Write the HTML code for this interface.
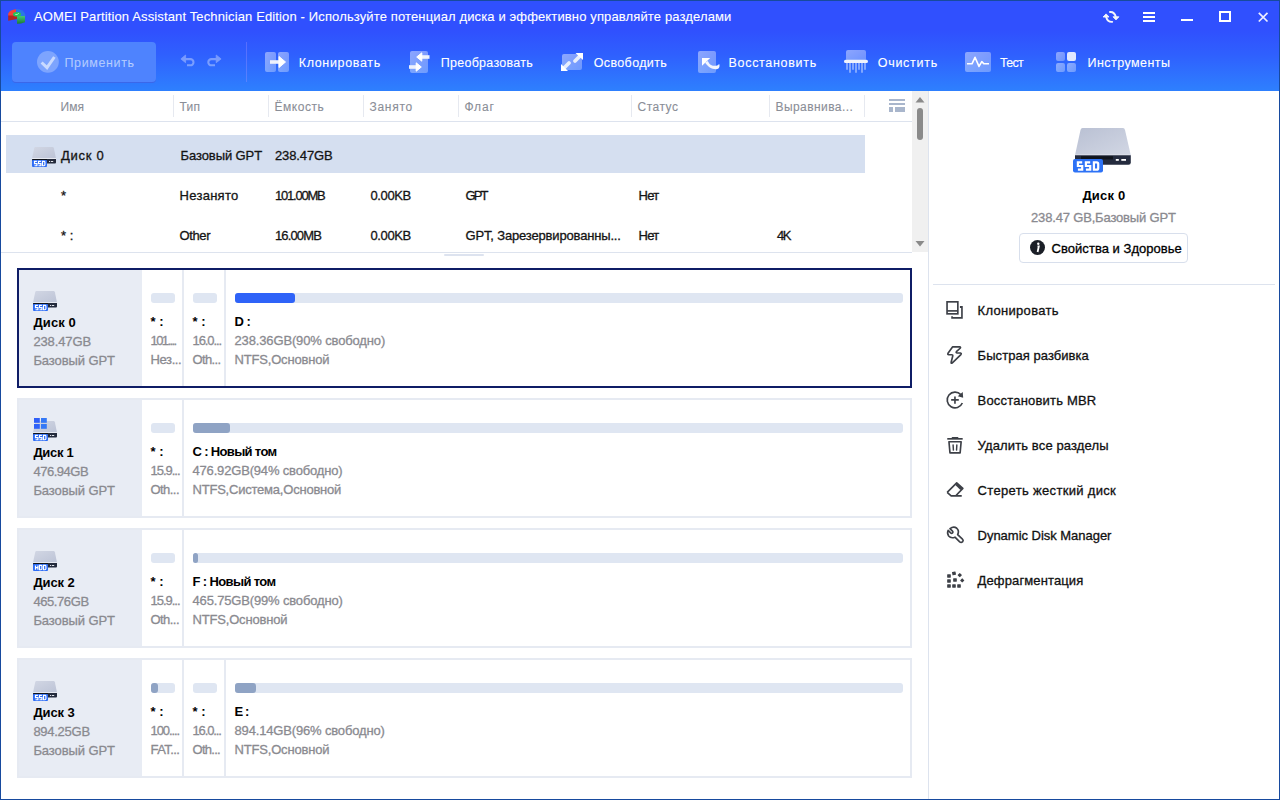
<!DOCTYPE html><html><head><meta charset="utf-8"><style>
*{margin:0;padding:0;box-sizing:border-box}
html,body{width:1280px;height:800px;overflow:hidden;background:#fff;font-family:"Liberation Sans", sans-serif}
.t{position:absolute;white-space:nowrap}
.a{position:absolute}
.m{-webkit-text-stroke:0.25px currentColor}
svg{position:absolute;overflow:visible}
</style></head><body>
<div class="a" style="left:0px;top:0px;width:1280px;height:91px;background:linear-gradient(180deg,#3050fe 0px,#3050fe 30px,#2f60fe 55px,#2e80fe 91px)"></div>
<svg style="left:5px;top:6px" width="24" height="20" viewBox="0 0 24 20">
<defs><linearGradient id="lg" x1="0" y1="0" x2="0" y2="1"><stop offset="0" stop-color="#42c878"/><stop offset="1" stop-color="#1f7a35"/></linearGradient></defs>
<path d="M11 3.2 Q5 3.5 3.2 7.5 L3.2 10 L11 10 Z" fill="#f2433a"/>
<path d="M3.2 9.5 L12 9.5 L12 13 L3.2 14.7 Z" fill="#b52520"/>
<path d="M11 3 Q19 3 20.5 9 L20.5 10 L12 10 Z" fill="#2a78e4"/>
<path d="M12 10 L20 10 L20 16.2 Q16 17.7 12 17.7 Z" fill="url(#lg)"/>
<ellipse cx="12" cy="8.2" rx="4" ry="2.3" fill="#22c55a"/>
<path d="M10.3 8.5 L12.2 8.5 L13.8 7.3" stroke="#c8f5d5" stroke-width="0.8" fill="none"/>
</svg><div class="t" style="left:34px;top:6.5px;font-size:13px;line-height:20px;color:#fff;font-weight:normal;-webkit-text-stroke:0.1px currentColor;letter-spacing:0.133px;">AOMEI Partition Assistant Technician Edition - Используйте потенциал диска и эффективно управляйте разделами</div>
<svg style="left:1102px;top:10px" width="18" height="14" viewBox="0 0 18 14">
<path d="M8 2 Q12.5 1.6 13.9 7.2" stroke="#f4f5fa" stroke-width="1.9" fill="none" stroke-linecap="round"/>
<path d="M11 6.8 L16.9 6.8 L14 9.9 Z" fill="#f4f5fa" stroke="#f4f5fa" stroke-width="0.9" stroke-linejoin="round"/>
<path d="M10.2 11.9 Q5.6 12.2 4.1 7" stroke="#f4f5fa" stroke-width="1.9" fill="none" stroke-linecap="round"/>
<path d="M1.1 7 L7 7 L4.1 3.9 Z" fill="#f4f5fa" stroke="#f4f5fa" stroke-width="0.9" stroke-linejoin="round"/>
</svg><div class="a" style="left:1143px;top:12px;width:12px;height:2px;background:#fff"></div>
<div class="a" style="left:1143px;top:16px;width:12px;height:2px;background:#fff"></div>
<div class="a" style="left:1143px;top:20px;width:12px;height:2px;background:#fff"></div>
<div class="a" style="left:1181px;top:19px;width:12px;height:2px;background:#fff"></div>
<div class="a" style="left:1219px;top:11px;width:12px;height:11px;border:2px solid #fff"></div>
<svg style="left:1257px;top:11px" width="12" height="12" viewBox="0 0 12 12">
<path d="M1.8 1.8 L10.5 10.5 M10.5 1.8 L1.8 10.5" stroke="#eef" stroke-width="1.7"/>
</svg><div class="a" style="left:12px;top:42px;width:144px;height:40px;background:#4e83fe;border-radius:4px;box-shadow:0 1px 0 rgba(70,90,215,0.55)"></div>
<svg style="left:37px;top:51px" width="22" height="22" viewBox="0 0 22 22">
<circle cx="10.9" cy="10.9" r="10.9" fill="rgba(255,255,255,0.27)"/>
<path d="M4.6 11.5 L10 16.6 L17.4 6" stroke="rgba(230,238,255,0.72)" stroke-width="3" fill="none"/>
</svg><div class="t" style="left:64.5px;top:53.2px;font-size:12.5px;line-height:20px;color:rgba(220,230,255,0.7);font-weight:normal;-webkit-text-stroke:0.1px currentColor;letter-spacing:0.616px;">Применить</div>
<svg style="left:180px;top:54px" width="44" height="14" viewBox="0 0 44 14"><g opacity="0.36">
<path d="M5 5.1 H10.4 A3.1 3.1 0 0 1 10.4 11.3 H7" stroke="#fff" stroke-width="2.1" fill="none"/>
<path d="M0.9 4.9 L5.6 1 L5.6 8.7 Z" fill="#fff" stroke="#fff" stroke-width="0.8" stroke-linejoin="round"/>
<path d="M36.8 5.1 H31.4 A3.1 3.1 0 0 0 31.4 11.3 H35" stroke="#fff" stroke-width="2.1" fill="none"/>
<path d="M41.1 4.9 L36.2 1 L36.2 8.7 Z" fill="#fff" stroke="#fff" stroke-width="0.8" stroke-linejoin="round"/>
</g></svg><div class="a" style="left:246px;top:42px;width:1px;height:40px;background:rgba(175,155,255,0.32)"></div>
<svg style="left:0;top:0" width="0" height="0"><defs><linearGradient id="pg" x1="0" y1="0" x2="1" y2="1"><stop offset="0" stop-color="#fff" stop-opacity="0.45"/><stop offset="1" stop-color="#fff" stop-opacity="0.3"/></linearGradient></defs></svg><svg style="left:265px;top:52px" width="24" height="20" viewBox="0 0 24 20">
<rect x="0" y="0" width="11" height="20" rx="2" fill="url(#pg)"/>
<rect x="13" y="0" width="11" height="20" rx="2" fill="url(#pg)"/>
<path d="M5 10 L16 10" stroke="#eef2fc" stroke-width="3.6"/>
<path d="M14 4.5 L20.5 10 L14 15.5 Z" fill="#fff" stroke="#fff" stroke-width="1" stroke-linejoin="round"/>
</svg><div class="t" style="left:298.7px;top:53.2px;font-size:12.5px;line-height:20px;color:#fff;font-weight:normal;-webkit-text-stroke:0.1px currentColor;letter-spacing:0.664px;">Клонировать</div>
<svg style="left:409px;top:51px" width="22" height="22" viewBox="0 0 22 22">
<rect x="1" y="0" width="18" height="22" rx="2" fill="url(#pg)"/>
<path d="M11 6 L20.5 6" stroke="#eef2fc" stroke-width="3.6"/>
<path d="M12.8 1.8 L7.7 6 L12.8 10.2 Z" fill="#fff" stroke="#fff" stroke-width="1" stroke-linejoin="round"/>
<path d="M0 16 L9 16" stroke="#eef2fc" stroke-width="3.6"/>
<path d="M7.2 11.8 L12.3 16 L7.2 20.2 Z" fill="#fff" stroke="#fff" stroke-width="1" stroke-linejoin="round"/>
</svg><div class="t" style="left:440.7px;top:53.2px;font-size:12.5px;line-height:20px;color:#fff;font-weight:normal;-webkit-text-stroke:0.1px currentColor;letter-spacing:0.283px;">Преобразовать</div>
<svg style="left:561px;top:53px" width="22" height="18" viewBox="0 0 22 18">
<rect x="1" y="1" width="20" height="16" rx="2" fill="url(#pg)"/>
<path d="M3 15 L8 10 M14 8 L19.5 2.5" stroke="#e8eefc" stroke-width="3.8" stroke-linecap="round"/>
<path d="M0 11 L0 18 L7 18 Z" fill="#fff"/>
<path d="M14.5 0 L22 0 L22 7 Z" fill="#fff"/>
</svg><div class="t" style="left:593.8px;top:53.2px;font-size:12.5px;line-height:20px;color:#fff;font-weight:normal;-webkit-text-stroke:0.1px currentColor;letter-spacing:0.349px;">Освободить</div>
<svg style="left:698px;top:51px" width="22" height="22" viewBox="0 0 22 22">
<rect x="0" y="0" width="18" height="22" rx="2" fill="url(#pg)"/>
<path d="M4 7 L12.2 7 L4 14.8 Z" fill="#fff"/>
<path d="M7 11.5 C10 16 14 18.5 18.5 18.2 C21 18 22.2 15.5 21.2 13 C19.5 15 16 15.5 13 14 C11.5 13 10.5 11.5 9.8 10 Z" fill="#f2f5fd"/>
</svg><div class="t" style="left:728.5px;top:53.2px;font-size:12.5px;line-height:20px;color:#fff;font-weight:normal;-webkit-text-stroke:0.1px currentColor;letter-spacing:0.697px;">Восстановить</div>
<svg style="left:844px;top:50px" width="24" height="24" viewBox="0 0 24 24">
<rect x="2" y="0" width="20" height="11" rx="2" fill="url(#pg)"/>
<rect x="0" y="9.8" width="24" height="3.2" rx="1.6" fill="#f0f3fc"/>
<path d="M3 13 V19.8 M9 13 V19.8 M15 13 V19.8 M21 13 V19.8" stroke="rgba(255,255,255,0.4)" stroke-width="2"/>
<path d="M6 13 V22.8 M12 13 V22.8 M18 13 V22.8" stroke="rgba(255,255,255,0.4)" stroke-width="2"/>
</svg><div class="t" style="left:877.7px;top:53.2px;font-size:12.5px;line-height:20px;color:#fff;font-weight:normal;-webkit-text-stroke:0.1px currentColor;letter-spacing:0.729px;">Очистить</div>
<svg style="left:965px;top:52px" width="26" height="20" viewBox="0 0 26 20">
<rect x="0" y="0" width="26" height="20" rx="2" fill="url(#pg)"/>
<path d="M2 11.8 L7 11.8 L10 5.3 L14 14.4 L16.8 9.7 L19 11.8 L24 11.8" stroke="#fff" stroke-width="1.6" fill="none" stroke-linejoin="round"/>
</svg><div class="t" style="left:1000px;top:53.2px;font-size:12.5px;line-height:20px;color:#fff;font-weight:normal;-webkit-text-stroke:0.1px currentColor;letter-spacing:-0.712px;">Тест</div>
<svg style="left:1056px;top:52px" width="20" height="20" viewBox="0 0 20 20">
<rect x="0" y="0" width="9" height="9" rx="2" fill="url(#pg)"/>
<rect x="11" y="0" width="9" height="9" rx="2" fill="rgba(255,255,255,0.85)"/>
<rect x="0" y="11" width="9" height="9" rx="2" fill="url(#pg)"/>
<rect x="11" y="11" width="9" height="9" rx="2" fill="url(#pg)"/>
</svg><div class="t" style="left:1087.6px;top:53.2px;font-size:12.5px;line-height:20px;color:#fff;font-weight:normal;-webkit-text-stroke:0.1px currentColor;letter-spacing:0.444px;">Инструменты</div>
<div class="a" style="left:0px;top:121px;width:912px;height:1px;background:#dde3ee"></div>
<div class="a" style="left:173px;top:95px;width:1px;height:22px;background:#e6e9f0"></div>
<div class="a" style="left:268px;top:95px;width:1px;height:22px;background:#e6e9f0"></div>
<div class="a" style="left:363px;top:95px;width:1px;height:22px;background:#e6e9f0"></div>
<div class="a" style="left:458px;top:95px;width:1px;height:22px;background:#e6e9f0"></div>
<div class="a" style="left:631px;top:95px;width:1px;height:22px;background:#e6e9f0"></div>
<div class="a" style="left:769px;top:95px;width:1px;height:22px;background:#e6e9f0"></div>
<div class="a" style="left:864px;top:95px;width:1px;height:22px;background:#e6e9f0"></div>
<div class="t" style="left:60.6px;top:96.9px;font-size:12px;line-height:20px;color:#8a8e97;font-weight:normal;-webkit-text-stroke:0.1px currentColor;letter-spacing:0.062px;">Имя</div>
<div class="t" style="left:179.5px;top:96.9px;font-size:12px;line-height:20px;color:#8a8e97;font-weight:normal;-webkit-text-stroke:0.1px currentColor;letter-spacing:0.247px;">Тип</div>
<div class="t" style="left:274.5px;top:96.9px;font-size:12px;line-height:20px;color:#8a8e97;font-weight:normal;-webkit-text-stroke:0.1px currentColor;letter-spacing:0.531px;">Ёмкость</div>
<div class="t" style="left:369.5px;top:96.9px;font-size:12px;line-height:20px;color:#8a8e97;font-weight:normal;-webkit-text-stroke:0.1px currentColor;letter-spacing:0.718px;">Занято</div>
<div class="t" style="left:464.5px;top:96.9px;font-size:12px;line-height:20px;color:#8a8e97;font-weight:normal;-webkit-text-stroke:0.1px currentColor;letter-spacing:0.867px;">Флаг</div>
<div class="t" style="left:637.5px;top:96.9px;font-size:12px;line-height:20px;color:#8a8e97;font-weight:normal;-webkit-text-stroke:0.1px currentColor;letter-spacing:0.513px;">Статус</div>
<div class="t" style="left:775.5px;top:96.9px;font-size:12px;line-height:20px;color:#8a8e97;font-weight:normal;-webkit-text-stroke:0.1px currentColor;letter-spacing:0.431px;">Выравнива...</div>
<svg style="left:889px;top:99px" width="16" height="13" viewBox="0 0 16 13">
<rect x="0" y="0" width="16" height="2" fill="#a9b6cc"/>
<rect x="0" y="4" width="16" height="2" fill="#a9b6cc"/>
<rect x="0" y="8" width="4" height="5" fill="#a9b6cc"/>
<rect x="6" y="8" width="10" height="5" fill="#a9b6cc"/>
</svg><div class="a" style="left:912px;top:91px;width:16px;height:161px;background:#f0f0f0"></div>
<svg style="left:915px;top:96px" width="10" height="152" viewBox="0 0 10 152">
<path d="M0.5 6.5 L5 1 L9.5 6.5 Z" fill="#8a8a8a"/>
<path d="M0.5 145 L5 150.5 L9.5 145 Z" fill="#8a8a8a"/>
</svg><div class="a" style="left:917px;top:108px;width:6px;height:32px;background:#8a8a8a;border-radius:3px"></div>
<div class="a" style="left:0px;top:252px;width:912px;height:1px;background:#dde3ee"></div>
<div class="a" style="left:444px;top:254px;width:40px;height:2px;background:#dde3ef;border-radius:1px"></div>
<div class="a" style="left:6px;top:135px;width:859px;height:38px;background:#d5dff0"></div>
<svg style="left:32px;top:147px" width="25" height="21" viewBox="0 0 25 21">
<defs><linearGradient id="gi" x1="0" y1="0" x2="1" y2="1"><stop offset="0" stop-color="#d2d7e4"/><stop offset="1" stop-color="#bcc3d6"/></linearGradient></defs>
<path d="M3.2 0 L20.5 0 Q21.6 0 21.9 1.2 L24 11.5 L0 11.5 L2.2 1.2 Q2.5 0 3.2 0 Z" fill="url(#gi)"/>
<rect x="0" y="11" width="24" height="1" fill="#e6e9f1"/>
<path d="M0 12 H24 V15.5 Q24 16.5 23 16.5 H0 Z" fill="#232a3c"/>
<rect x="1" y="12" width="14" height="1" fill="#0e121a"/>
<rect x="17" y="14" width="1.2" height="1" fill="#dfe3ea"/><rect x="19" y="14" width="2.2" height="1" fill="#dfe3ea"/>

<rect x="0" y="13" width="15" height="7" rx="1" fill="#2d6cf5"/>
<path d="M4.9 14.4 H2.5 V16.55 H4.9 V18.7 H2.5 M8.9 14.4 H6.5 V16.55 H8.9 V18.7 H6.5 M10.5 14.4 H12.06 Q12.9 14.4 12.9 15.24 V17.86 Q12.9 18.7 12.06 18.7 H10.5 Z " stroke="#fff" stroke-width="1.15" fill="none" stroke-linejoin="miter" stroke-linecap="butt"/>
</svg><div class="t" style="left:61px;top:145.6px;font-size:13px;line-height:20px;color:#141414;font-weight:normal;-webkit-text-stroke:0.3px currentColor;letter-spacing:0.707px;">Диск 0</div>
<div class="t" style="left:180.5px;top:145.6px;font-size:13px;line-height:20px;color:#141414;font-weight:normal;-webkit-text-stroke:0.3px currentColor;letter-spacing:-0.087px;">Базовый GPT</div>
<div class="t" style="left:275px;top:145.6px;font-size:13px;line-height:20px;color:#141414;font-weight:normal;-webkit-text-stroke:0.3px currentColor;letter-spacing:-0.125px;">238.47GB</div>
<div class="t" style="left:61px;top:185.6px;font-size:13px;line-height:20px;color:#141414;font-weight:normal;-webkit-text-stroke:0.3px currentColor;">*</div>
<div class="t" style="left:179.5px;top:185.6px;font-size:13px;line-height:20px;color:#141414;font-weight:normal;-webkit-text-stroke:0.3px currentColor;letter-spacing:0.279px;">Незанято</div>
<div class="t" style="left:275px;top:185.6px;font-size:13px;line-height:20px;color:#141414;font-weight:normal;-webkit-text-stroke:0.3px currentColor;letter-spacing:-1.227px;">101.00MB</div>
<div class="t" style="left:370.5px;top:185.6px;font-size:13px;line-height:20px;color:#141414;font-weight:normal;-webkit-text-stroke:0.3px currentColor;letter-spacing:-0.395px;">0.00KB</div>
<div class="t" style="left:465.6px;top:185.6px;font-size:13px;line-height:20px;color:#141414;font-weight:normal;-webkit-text-stroke:0.3px currentColor;letter-spacing:-1.891px;">GPT</div>
<div class="t" style="left:638.6px;top:185.6px;font-size:13px;line-height:20px;color:#141414;font-weight:normal;-webkit-text-stroke:0.3px currentColor;letter-spacing:-0.743px;">Нет</div>
<div class="t" style="left:61px;top:225.5px;font-size:13px;line-height:20px;color:#141414;font-weight:normal;-webkit-text-stroke:0.3px currentColor;">* :</div>
<div class="t" style="left:179.5px;top:225.5px;font-size:13px;line-height:20px;color:#141414;font-weight:normal;-webkit-text-stroke:0.3px currentColor;letter-spacing:-0.371px;">Other</div>
<div class="t" style="left:275px;top:225.5px;font-size:13px;line-height:20px;color:#141414;font-weight:normal;-webkit-text-stroke:0.3px currentColor;letter-spacing:-0.860px;">16.00MB</div>
<div class="t" style="left:370.5px;top:225.5px;font-size:13px;line-height:20px;color:#141414;font-weight:normal;-webkit-text-stroke:0.3px currentColor;letter-spacing:-0.395px;">0.00KB</div>
<div class="t" style="left:465.6px;top:225.5px;font-size:13px;line-height:20px;color:#141414;font-weight:normal;-webkit-text-stroke:0.3px currentColor;letter-spacing:-0.169px;">GPT, Зарезервированны...</div>
<div class="t" style="left:638.6px;top:225.5px;font-size:13px;line-height:20px;color:#141414;font-weight:normal;-webkit-text-stroke:0.3px currentColor;letter-spacing:-0.743px;">Нет</div>
<div class="t" style="left:777px;top:225.5px;font-size:13px;line-height:20px;color:#141414;font-weight:normal;-webkit-text-stroke:0.3px currentColor;letter-spacing:-1.430px;">4K</div>
<div class="a" style="left:17px;top:268px;width:895px;height:120px;border:2px solid #0f1d66;background:#fff"></div>
<div class="a" style="left:19px;top:270px;width:123px;height:116px;background:#e8ecf4"></div>
<div class="a" style="left:182px;top:270px;width:2px;height:116px;background:#e6eaf2"></div>
<div class="a" style="left:224px;top:270px;width:2px;height:116px;background:#e6eaf2"></div>
<svg style="left:33px;top:291px" width="25" height="21" viewBox="0 0 25 21">
<defs><linearGradient id="gi" x1="0" y1="0" x2="1" y2="1"><stop offset="0" stop-color="#d2d7e4"/><stop offset="1" stop-color="#bcc3d6"/></linearGradient></defs>
<path d="M3.2 0 L20.5 0 Q21.6 0 21.9 1.2 L24 11.5 L0 11.5 L2.2 1.2 Q2.5 0 3.2 0 Z" fill="url(#gi)"/>
<rect x="0" y="11" width="24" height="1" fill="#e6e9f1"/>
<path d="M0 12 H24 V15.5 Q24 16.5 23 16.5 H0 Z" fill="#232a3c"/>
<rect x="1" y="12" width="14" height="1" fill="#0e121a"/>
<rect x="17" y="14" width="1.2" height="1" fill="#dfe3ea"/><rect x="19" y="14" width="2.2" height="1" fill="#dfe3ea"/>

<rect x="0" y="13" width="15" height="7" rx="1" fill="#2d6cf5"/>
<path d="M4.9 14.4 H2.5 V16.55 H4.9 V18.7 H2.5 M8.9 14.4 H6.5 V16.55 H8.9 V18.7 H6.5 M10.5 14.4 H12.06 Q12.9 14.4 12.9 15.24 V17.86 Q12.9 18.7 12.06 18.7 H10.5 Z " stroke="#fff" stroke-width="1.15" fill="none" stroke-linejoin="miter" stroke-linecap="butt"/>
</svg><div class="t" style="left:33.4px;top:313.1px;font-size:13px;line-height:20px;color:#000;font-weight:bold;letter-spacing:0.120px;">Диск 0</div>
<div class="t" style="left:33.4px;top:331.5px;font-size:13px;line-height:20px;color:#8a8a90;font-weight:normal;-webkit-text-stroke:0.3px currentColor;letter-spacing:-0.125px;">238.47GB</div>
<div class="t" style="left:33.4px;top:350.8px;font-size:13px;line-height:20px;color:#8a8a90;font-weight:normal;-webkit-text-stroke:0.3px currentColor;letter-spacing:-0.097px;">Базовый GPT</div>
<div class="a" style="left:150.5px;top:293px;width:24px;height:10px;background:#dfe6f2;border-radius:3px"></div>
<div class="t" style="left:150.5px;top:312.0px;font-size:13px;line-height:20px;color:#000;font-weight:bold;letter-spacing:0.040px;">* :</div>
<div class="t" style="left:150.5px;top:330.8px;font-size:13px;line-height:20px;color:#8a8a90;font-weight:normal;-webkit-text-stroke:0.3px currentColor;letter-spacing:-1.604px;">101....</div>
<div class="t" style="left:150.5px;top:349.5px;font-size:13px;line-height:20px;color:#8a8a90;font-weight:normal;-webkit-text-stroke:0.3px currentColor;letter-spacing:-0.383px;">Нез...</div>
<div class="a" style="left:192.5px;top:293px;width:24px;height:10px;background:#dfe6f2;border-radius:3px"></div>
<div class="t" style="left:192.5px;top:312.0px;font-size:13px;line-height:20px;color:#000;font-weight:bold;letter-spacing:0.040px;">* :</div>
<div class="t" style="left:192.5px;top:330.8px;font-size:13px;line-height:20px;color:#8a8a90;font-weight:normal;-webkit-text-stroke:0.3px currentColor;letter-spacing:-1.088px;">16.0...</div>
<div class="t" style="left:192.5px;top:349.5px;font-size:13px;line-height:20px;color:#8a8a90;font-weight:normal;-webkit-text-stroke:0.3px currentColor;letter-spacing:-0.635px;">Oth...</div>
<div class="a" style="left:234.5px;top:293px;width:668px;height:10px;background:#dfe6f2;border-radius:3px"></div>
<div class="a" style="left:234.5px;top:293px;width:60px;height:10px;background:#2f63f8;border-radius:3px"></div>
<div class="t" style="left:234.5px;top:312.0px;font-size:13px;line-height:20px;color:#000;font-weight:bold;letter-spacing:-0.500px;">D :</div>
<div class="t" style="left:234.5px;top:330.8px;font-size:13px;line-height:20px;color:#8a8a90;font-weight:normal;-webkit-text-stroke:0.3px currentColor;letter-spacing:-0.142px;">238.36GB(90% свободно)</div>
<div class="t" style="left:234.5px;top:349.5px;font-size:13px;line-height:20px;color:#8a8a90;font-weight:normal;-webkit-text-stroke:0.3px currentColor;letter-spacing:-0.174px;">NTFS,Основной</div>
<div class="a" style="left:17px;top:398px;width:895px;height:120px;border:2px solid #e6eaf2;background:#fff"></div>
<div class="a" style="left:19px;top:400px;width:123px;height:116px;background:#e8ecf4"></div>
<div class="a" style="left:182px;top:400px;width:2px;height:116px;background:#e6eaf2"></div>
<svg style="left:33px;top:421px" width="25" height="21" viewBox="0 0 25 21">
<defs><linearGradient id="gi" x1="0" y1="0" x2="1" y2="1"><stop offset="0" stop-color="#d2d7e4"/><stop offset="1" stop-color="#bcc3d6"/></linearGradient></defs>
<path d="M3.2 0 L20.5 0 Q21.6 0 21.9 1.2 L24 11.5 L0 11.5 L2.2 1.2 Q2.5 0 3.2 0 Z" fill="url(#gi)"/>
<rect x="0" y="11" width="24" height="1" fill="#e6e9f1"/>
<path d="M0 12 H24 V15.5 Q24 16.5 23 16.5 H0 Z" fill="#232a3c"/>
<rect x="1" y="12" width="14" height="1" fill="#0e121a"/>
<rect x="17" y="14" width="1.2" height="1" fill="#dfe3ea"/><rect x="19" y="14" width="2.2" height="1" fill="#dfe3ea"/>
<rect x="1" y="-3" width="5.8" height="4.8" fill="#2f5ff8"/><rect x="8" y="-3" width="5.8" height="4.8" fill="#3478f6"/><rect x="1" y="3" width="5.8" height="4.8" fill="#2f62f8"/><rect x="8" y="3" width="5.8" height="4.8" fill="#3478f6"/>
<rect x="0" y="13" width="15" height="7" rx="1" fill="#2d6cf5"/>
<path d="M4.9 14.4 H2.5 V16.55 H4.9 V18.7 H2.5 M8.9 14.4 H6.5 V16.55 H8.9 V18.7 H6.5 M10.5 14.4 H12.06 Q12.9 14.4 12.9 15.24 V17.86 Q12.9 18.7 12.06 18.7 H10.5 Z " stroke="#fff" stroke-width="1.15" fill="none" stroke-linejoin="miter" stroke-linecap="butt"/>
</svg><div class="t" style="left:33.4px;top:443.1px;font-size:13px;line-height:20px;color:#000;font-weight:bold;letter-spacing:-0.320px;">Диск 1</div>
<div class="t" style="left:33.4px;top:461.5px;font-size:13px;line-height:20px;color:#8a8a90;font-weight:normal;-webkit-text-stroke:0.3px currentColor;letter-spacing:-0.468px;">476.94GB</div>
<div class="t" style="left:33.4px;top:480.8px;font-size:13px;line-height:20px;color:#8a8a90;font-weight:normal;-webkit-text-stroke:0.3px currentColor;letter-spacing:-0.097px;">Базовый GPT</div>
<div class="a" style="left:150.5px;top:423px;width:24px;height:10px;background:#dfe6f2;border-radius:3px"></div>
<div class="t" style="left:150.5px;top:442.0px;font-size:13px;line-height:20px;color:#000;font-weight:bold;letter-spacing:0.040px;">* :</div>
<div class="t" style="left:150.5px;top:460.8px;font-size:13px;line-height:20px;color:#8a8a90;font-weight:normal;-webkit-text-stroke:0.3px currentColor;letter-spacing:-1.021px;">15.9...</div>
<div class="t" style="left:150.5px;top:479.5px;font-size:13px;line-height:20px;color:#8a8a90;font-weight:normal;-webkit-text-stroke:0.3px currentColor;letter-spacing:-0.555px;">Oth...</div>
<div class="a" style="left:192.5px;top:423px;width:710px;height:10px;background:#dfe6f2;border-radius:3px"></div>
<div class="a" style="left:192.5px;top:423px;width:37px;height:10px;background:#8fa3c4;border-radius:3px"></div>
<div class="t" style="left:192.5px;top:442.0px;font-size:13px;line-height:20px;color:#000;font-weight:bold;letter-spacing:-0.661px;">C : Новый том</div>
<div class="t" style="left:192.5px;top:460.8px;font-size:13px;line-height:20px;color:#8a8a90;font-weight:normal;-webkit-text-stroke:0.3px currentColor;letter-spacing:-0.175px;">476.92GB(94% свободно)</div>
<div class="t" style="left:192.5px;top:479.5px;font-size:13px;line-height:20px;color:#8a8a90;font-weight:normal;-webkit-text-stroke:0.3px currentColor;letter-spacing:-0.213px;">NTFS,Система,Основной</div>
<div class="a" style="left:17px;top:528px;width:895px;height:120px;border:2px solid #e6eaf2;background:#fff"></div>
<div class="a" style="left:19px;top:530px;width:123px;height:116px;background:#e8ecf4"></div>
<div class="a" style="left:182px;top:530px;width:2px;height:116px;background:#e6eaf2"></div>
<svg style="left:33px;top:551px" width="25" height="21" viewBox="0 0 25 21">
<defs><linearGradient id="gi" x1="0" y1="0" x2="1" y2="1"><stop offset="0" stop-color="#d2d7e4"/><stop offset="1" stop-color="#bcc3d6"/></linearGradient></defs>
<path d="M3.2 0 L20.5 0 Q21.6 0 21.9 1.2 L24 11.5 L0 11.5 L2.2 1.2 Q2.5 0 3.2 0 Z" fill="url(#gi)"/>
<rect x="0" y="11" width="24" height="1" fill="#e6e9f1"/>
<path d="M0 12 H24 V15.5 Q24 16.5 23 16.5 H0 Z" fill="#232a3c"/>
<rect x="1" y="12" width="14" height="1" fill="#0e121a"/>
<rect x="17" y="14" width="1.2" height="1" fill="#dfe3ea"/><rect x="19" y="14" width="2.2" height="1" fill="#dfe3ea"/>

<rect x="0" y="13" width="15" height="7" rx="1" fill="#2d6cf5"/>
<path d="M2.5 14.4 V18.7 M4.9 14.4 V18.7 M2.5 16.55 H4.9 M6.5 14.4 H8.06 Q8.9 14.4 8.9 15.24 V17.86 Q8.9 18.7 8.06 18.7 H6.5 Z M10.5 14.4 H12.06 Q12.9 14.4 12.9 15.24 V17.86 Q12.9 18.7 12.06 18.7 H10.5 Z " stroke="#fff" stroke-width="1.15" fill="none" stroke-linejoin="miter" stroke-linecap="butt"/>
</svg><div class="t" style="left:33.4px;top:573.1px;font-size:13px;line-height:20px;color:#000;font-weight:bold;letter-spacing:-0.120px;">Диск 2</div>
<div class="t" style="left:33.4px;top:591.5px;font-size:13px;line-height:20px;color:#8a8a90;font-weight:normal;-webkit-text-stroke:0.3px currentColor;letter-spacing:-0.411px;">465.76GB</div>
<div class="t" style="left:33.4px;top:610.8px;font-size:13px;line-height:20px;color:#8a8a90;font-weight:normal;-webkit-text-stroke:0.3px currentColor;letter-spacing:-0.097px;">Базовый GPT</div>
<div class="a" style="left:150.5px;top:553px;width:24px;height:10px;background:#dfe6f2;border-radius:3px"></div>
<div class="t" style="left:150.5px;top:572.0px;font-size:13px;line-height:20px;color:#000;font-weight:bold;letter-spacing:0.040px;">* :</div>
<div class="t" style="left:150.5px;top:590.8px;font-size:13px;line-height:20px;color:#8a8a90;font-weight:normal;-webkit-text-stroke:0.3px currentColor;letter-spacing:-1.021px;">15.9...</div>
<div class="t" style="left:150.5px;top:609.5px;font-size:13px;line-height:20px;color:#8a8a90;font-weight:normal;-webkit-text-stroke:0.3px currentColor;letter-spacing:-0.555px;">Oth...</div>
<div class="a" style="left:192.5px;top:553px;width:710px;height:10px;background:#dfe6f2;border-radius:3px"></div>
<div class="a" style="left:192.5px;top:553px;width:5px;height:10px;background:#8fa3c4;border-radius:3px"></div>
<div class="t" style="left:192.5px;top:572.0px;font-size:13px;line-height:20px;color:#000;font-weight:bold;letter-spacing:-0.624px;">F : Новый том</div>
<div class="t" style="left:192.5px;top:590.8px;font-size:13px;line-height:20px;color:#8a8a90;font-weight:normal;-webkit-text-stroke:0.3px currentColor;letter-spacing:-0.161px;">465.75GB(99% свободно)</div>
<div class="t" style="left:192.5px;top:609.5px;font-size:13px;line-height:20px;color:#8a8a90;font-weight:normal;-webkit-text-stroke:0.3px currentColor;letter-spacing:-0.174px;">NTFS,Основной</div>
<div class="a" style="left:17px;top:658px;width:895px;height:120px;border:2px solid #e6eaf2;background:#fff"></div>
<div class="a" style="left:19px;top:660px;width:123px;height:116px;background:#e8ecf4"></div>
<div class="a" style="left:182px;top:660px;width:2px;height:116px;background:#e6eaf2"></div>
<div class="a" style="left:224px;top:660px;width:2px;height:116px;background:#e6eaf2"></div>
<svg style="left:33px;top:681px" width="25" height="21" viewBox="0 0 25 21">
<defs><linearGradient id="gi" x1="0" y1="0" x2="1" y2="1"><stop offset="0" stop-color="#d2d7e4"/><stop offset="1" stop-color="#bcc3d6"/></linearGradient></defs>
<path d="M3.2 0 L20.5 0 Q21.6 0 21.9 1.2 L24 11.5 L0 11.5 L2.2 1.2 Q2.5 0 3.2 0 Z" fill="url(#gi)"/>
<rect x="0" y="11" width="24" height="1" fill="#e6e9f1"/>
<path d="M0 12 H24 V15.5 Q24 16.5 23 16.5 H0 Z" fill="#232a3c"/>
<rect x="1" y="12" width="14" height="1" fill="#0e121a"/>
<rect x="17" y="14" width="1.2" height="1" fill="#dfe3ea"/><rect x="19" y="14" width="2.2" height="1" fill="#dfe3ea"/>

<rect x="0" y="13" width="15" height="7" rx="1" fill="#2d6cf5"/>
<path d="M4.9 14.4 H2.5 V16.55 H4.9 V18.7 H2.5 M8.9 14.4 H6.5 V16.55 H8.9 V18.7 H6.5 M10.5 14.4 H12.06 Q12.9 14.4 12.9 15.24 V17.86 Q12.9 18.7 12.06 18.7 H10.5 Z " stroke="#fff" stroke-width="1.15" fill="none" stroke-linejoin="miter" stroke-linecap="butt"/>
</svg><div class="t" style="left:33.4px;top:703.1px;font-size:13px;line-height:20px;color:#000;font-weight:bold;letter-spacing:-0.120px;">Диск 3</div>
<div class="t" style="left:33.4px;top:721.5px;font-size:13px;line-height:20px;color:#8a8a90;font-weight:normal;-webkit-text-stroke:0.3px currentColor;letter-spacing:-0.268px;">894.25GB</div>
<div class="t" style="left:33.4px;top:740.8px;font-size:13px;line-height:20px;color:#8a8a90;font-weight:normal;-webkit-text-stroke:0.3px currentColor;letter-spacing:-0.097px;">Базовый GPT</div>
<div class="a" style="left:150.5px;top:683px;width:24px;height:10px;background:#dfe6f2;border-radius:3px"></div>
<div class="a" style="left:150.5px;top:683px;width:7px;height:10px;background:#8fa3c4;border-radius:3px"></div>
<div class="t" style="left:150.5px;top:702.0px;font-size:13px;line-height:20px;color:#000;font-weight:bold;letter-spacing:0.040px;">* :</div>
<div class="t" style="left:150.5px;top:720.8px;font-size:13px;line-height:20px;color:#8a8a90;font-weight:normal;-webkit-text-stroke:0.3px currentColor;letter-spacing:-1.088px;">100....</div>
<div class="t" style="left:150.5px;top:739.5px;font-size:13px;line-height:20px;color:#8a8a90;font-weight:normal;-webkit-text-stroke:0.3px currentColor;letter-spacing:-0.571px;">FAT...</div>
<div class="a" style="left:192.5px;top:683px;width:24px;height:10px;background:#dfe6f2;border-radius:3px"></div>
<div class="t" style="left:192.5px;top:702.0px;font-size:13px;line-height:20px;color:#000;font-weight:bold;letter-spacing:0.040px;">* :</div>
<div class="t" style="left:192.5px;top:720.8px;font-size:13px;line-height:20px;color:#8a8a90;font-weight:normal;-webkit-text-stroke:0.3px currentColor;letter-spacing:-1.129px;">16.0...</div>
<div class="t" style="left:192.5px;top:739.5px;font-size:13px;line-height:20px;color:#8a8a90;font-weight:normal;-webkit-text-stroke:0.3px currentColor;letter-spacing:-0.735px;">Oth...</div>
<div class="a" style="left:234.5px;top:683px;width:668px;height:10px;background:#dfe6f2;border-radius:3px"></div>
<div class="a" style="left:234.5px;top:683px;width:21px;height:10px;background:#8fa3c4;border-radius:3px"></div>
<div class="t" style="left:234.5px;top:702.0px;font-size:13px;line-height:20px;color:#000;font-weight:bold;letter-spacing:-0.841px;">E :</div>
<div class="t" style="left:234.5px;top:720.8px;font-size:13px;line-height:20px;color:#8a8a90;font-weight:normal;-webkit-text-stroke:0.3px currentColor;letter-spacing:-0.161px;">894.14GB(96% свободно)</div>
<div class="t" style="left:234.5px;top:739.5px;font-size:13px;line-height:20px;color:#8a8a90;font-weight:normal;-webkit-text-stroke:0.3px currentColor;letter-spacing:-0.174px;">NTFS,Основной</div>
<div class="a" style="left:928px;top:91px;width:1px;height:708px;background:#dde3ee"></div>
<svg style="left:1073px;top:128px" width="58" height="45" viewBox="0 0 58 45">
<defs><linearGradient id="g2" x1="0" y1="0" x2="1" y2="1"><stop offset="0" stop-color="#b9c0d3"/><stop offset="1" stop-color="#d2d7e4"/></linearGradient></defs>
<path d="M9.5 0 L50 0 Q51.5 0 52 2 L57.8 27.2 L2 27.2 L7.5 2 Q8 0 9.5 0 Z" fill="url(#g2)"/>
<rect x="2" y="26.5" width="55.8" height="1" fill="#e3e6ee"/>
<path d="M2 27.2 H57.8 V34.5 Q57.8 36.7 55.5 36.7 H2 Z" fill="#242b3e"/>
<rect x="8" y="28.2" width="32" height="3.2" fill="#10141c"/>
<rect x="42.8" y="31" width="3" height="1.8" fill="#fff"/><rect x="48.3" y="31" width="4.7" height="1.8" fill="#fff"/>
<rect x="0" y="31" width="30" height="13.5" rx="2" fill="#2d72f6"/>
<path d="M9.2 34.3 H4.9 V38.0 H9.2 V41.699999999999996 H4.9 M17.2 34.3 H12.9 V38.0 H17.2 V41.699999999999996 H12.9 M20.9 34.3 H23.695 Q25.2 34.3 25.2 35.805 V40.19499999999999 Q25.2 41.699999999999996 23.695 41.699999999999996 H20.9 Z " stroke="#fff" stroke-width="2.2" fill="none" stroke-linejoin="miter" stroke-linecap="butt"/>
</svg><div class="t" style="left:1082.4px;top:185.9px;font-size:13px;line-height:20px;color:#000;font-weight:bold;letter-spacing:0.200px;">Диск 0</div>
<div class="t" style="left:1031px;top:208.2px;font-size:13px;line-height:20px;color:#8a8a90;font-weight:normal;-webkit-text-stroke:0.3px currentColor;letter-spacing:-0.167px;">238.47 GB,Базовый GPT</div>
<div class="a" style="left:1019px;top:233px;width:169px;height:30px;border:1px solid #d8dfec;border-radius:4px;background:#fff"></div>
<svg style="left:1030px;top:240px" width="15" height="15" viewBox="0 0 15 15">
<circle cx="7.5" cy="7.5" r="7.5" fill="#1b1f27"/>
<circle cx="8.3" cy="3.8" r="1.2" fill="#fff"/>
<path d="M7.5 6.3 L8.8 6.3 L7.6 12" stroke="#fff" stroke-width="1.8" fill="none"/>
</svg><div class="t" style="left:1051.6px;top:238.5px;font-size:13px;line-height:20px;color:#000;font-weight:normal;-webkit-text-stroke:0.3px currentColor;letter-spacing:0.035px;">Свойства и Здоровье</div>
<div class="a" style="left:933px;top:284px;width:342px;height:1px;background:#dde3ee"></div>
<svg style="left:942px;top:298px" width="24" height="24" viewBox="0 0 800 800"><rect x="168" y="128" width="360" height="400" stroke="#3d4047" stroke-width="55" fill="none"/><path d="M168 430 H528" stroke="#3d4047" stroke-width="55" fill="none"/><path d="M625 335 V290 H665 V660 H335 V612" stroke="#3d4047" stroke-width="55" fill="none"/></svg>
<div class="t" style="left:977.6px;top:300.8px;font-size:13px;line-height:20px;color:#111;font-weight:normal;-webkit-text-stroke:0.3px currentColor;letter-spacing:0.301px;">Клонировать</div>
<svg style="left:942px;top:343px" width="24" height="24" viewBox="0 0 800 800"><path d="M350 130 L595 130 Q635 140 605 175 L480 290 Q455 330 505 332 L615 332 Q660 345 630 385 L345 660 Q300 695 305 640 L358 435 Q365 392 325 390 L225 390 Q178 385 200 342 Z" stroke="#3d4047" stroke-width="55" fill="none" stroke-linejoin="round"/></svg>
<div class="t" style="left:977.6px;top:345.8px;font-size:13px;line-height:20px;color:#111;font-weight:normal;-webkit-text-stroke:0.3px currentColor;letter-spacing:0.056px;">Быстрая разбивка</div>
<svg style="left:942px;top:388px" width="24" height="24" viewBox="0 0 800 800"><path d="M628 222 A262 262 0 1 0 678 500" stroke="#3d4047" stroke-width="55" fill="none"/><path d="M692 135 L705 325 L525 275 Z" fill="#3d4047"/><path d="M432 280 V525 M305 398 H560" stroke="#3d4047" stroke-width="55" fill="none"/></svg>
<div class="t" style="left:977.6px;top:390.8px;font-size:13px;line-height:20px;color:#111;font-weight:normal;-webkit-text-stroke:0.3px currentColor;letter-spacing:0.190px;">Восстановить MBR</div>
<svg style="left:942px;top:433px" width="24" height="24" viewBox="0 0 800 800"><path d="M175 195 H690" stroke="#3d4047" stroke-width="55" fill="none"/><path d="M345 158 H525" stroke="#3d4047" stroke-width="45" stroke-linecap="round"/><path d="M232 292 H638 L604 662 H266 Z" stroke="#3d4047" stroke-width="55" fill="none" stroke-linejoin="round"/><path d="M370 395 L380 570 M495 395 L485 570" stroke="#3d4047" stroke-width="48" stroke-linecap="round"/></svg>
<div class="t" style="left:977.6px;top:435.8px;font-size:13px;line-height:20px;color:#111;font-weight:normal;-webkit-text-stroke:0.3px currentColor;letter-spacing:0.128px;">Удалить все разделы</div>
<svg style="left:942px;top:478px" width="24" height="24" viewBox="0 0 800 800"><path d="M172 480 L490 160 L695 345 L460 592 M172 480 L305 597 H658" stroke="#3d4047" stroke-width="55" fill="none" stroke-linejoin="round"/><path d="M475 205 L645 370" stroke="#3d4047" stroke-width="90"/></svg>
<div class="t" style="left:977.6px;top:480.8px;font-size:13px;line-height:20px;color:#111;font-weight:normal;-webkit-text-stroke:0.3px currentColor;letter-spacing:0.324px;">Стереть жесткий диск</div>
<svg style="left:942px;top:523px" width="24" height="24" viewBox="0 0 800 800"><path d="M265 185 L350 268 Q382 300 352 332 Q320 360 288 330 L205 248 Q160 345 222 432 Q300 525 432 472 L590 630 Q640 670 690 622 Q725 578 682 540 L522 385 Q585 262 492 175 Q392 95 265 185 Z" stroke="#3d4047" stroke-width="55" fill="none" stroke-linejoin="round"/></svg>
<div class="t" style="left:977.6px;top:525.8px;font-size:13px;line-height:20px;color:#111;font-weight:normal;-webkit-text-stroke:0.3px currentColor;letter-spacing:-0.029px;">Dynamic Disk Manager</div>
<svg style="left:942px;top:568px" width="24" height="24" viewBox="0 0 800 800"><g fill="#3d4047"><rect x="172" y="207" width="122" height="118" rx="14"/><rect x="172" y="375" width="122" height="115" rx="14"/><rect x="172" y="542" width="122" height="116" rx="14"/><rect x="372" y="342" width="122" height="116" rx="14"/><rect x="340" y="542" width="120" height="116" rx="14"/><rect x="507" y="542" width="120" height="116" rx="14"/><rect x="340" y="125" width="120" height="112" rx="14" transform="rotate(-12 400 181)"/><rect x="540" y="185" width="105" height="105" rx="14" transform="rotate(45 592 237)"/><rect x="622" y="362" width="105" height="105" rx="14" transform="rotate(45 674 414)"/></g></svg>
<div class="t" style="left:977.6px;top:570.8px;font-size:13px;line-height:20px;color:#111;font-weight:normal;-webkit-text-stroke:0.3px currentColor;letter-spacing:0.121px;">Дефрагментация</div>
<div class="a" style="left:0px;top:0px;width:1280px;height:800px;border:1px solid #174a9e;pointer-events:none"></div>
</body></html>
